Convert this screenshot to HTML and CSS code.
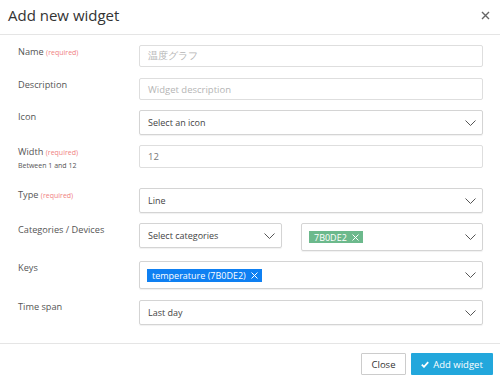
FILE: index.html
```html
<!DOCTYPE html>
<html>
<head>
  <title>Add new widget</title>
  <link rel="stylesheet" href="styles.css">
</head>
<body>
  <div class="modal">
    <div class="modal-header">
      <div class="modal-title">Add new widget</div>
      <div class="modal-close">
        <svg width="9" height="9" viewBox="0 0 9 9"><path d="M1 1L8 8M8 1L1 8" stroke="#666" stroke-width="1.4"/></svg>
      </div>
    </div>

    <div class="modal-body">
      <div class="form-row gap-11">
        <div class="form-label">Name <span class="required">(required)</span></div>
        <div class="form-field">
          <div class="text-input placeholder">温度グラフ</div>
        </div>
      </div>

      <div class="form-row">
        <div class="form-label">Description</div>
        <div class="form-field">
          <div class="text-input placeholder">Widget description</div>
        </div>
      </div>

      <div class="form-row">
        <div class="form-label">Icon</div>
        <div class="form-field">
          <div class="select-box">
            <span class="select-value">Select an icon</span>
            <svg class="chevron" width="11" height="6" viewBox="0 0 11 6"><path d="M0.5 0.5L5.5 5.5L10.5 0.5" fill="none" stroke="#555" stroke-width="1"/></svg>
          </div>
        </div>
      </div>

      <div class="form-row form-row-help">
        <div class="form-label">Width <span class="required">(required)</span>
          <div class="help">Between 1 and 12</div>
        </div>
        <div class="form-field">
          <div class="text-input number">12</div>
        </div>
      </div>

      <div class="form-row">
        <div class="form-label">Type <span class="required">(required)</span></div>
        <div class="form-field">
          <div class="select-box">
            <span class="select-value">Line</span>
            <svg class="chevron" width="11" height="6" viewBox="0 0 11 6"><path d="M0.5 0.5L5.5 5.5L10.5 0.5" fill="none" stroke="#555" stroke-width="1"/></svg>
          </div>
        </div>
      </div>

      <div class="form-row">
        <div class="form-label">Categories / Devices</div>
        <div class="form-field split">
          <div class="select-box categories">
            <span class="select-value">Select categories</span>
            <svg class="chevron" width="11" height="6" viewBox="0 0 11 6"><path d="M0.5 0.5L5.5 5.5L10.5 0.5" fill="none" stroke="#555" stroke-width="1"/></svg>
          </div>
          <div class="select-box multi devices">
            <span class="tag tag-green">7B0DE2
              <svg width="7" height="7" viewBox="0 0 7 7"><path d="M0.5 0.5L6.5 6.5M6.5 0.5L0.5 6.5" stroke="#fff" stroke-width="1"/></svg>
            </span>
            <svg class="chevron" width="11" height="6" viewBox="0 0 11 6"><path d="M0.5 0.5L5.5 5.5L10.5 0.5" fill="none" stroke="#555" stroke-width="1"/></svg>
          </div>
        </div>
      </div>

      <div class="form-row gap-11">
        <div class="form-label">Keys</div>
        <div class="form-field">
          <div class="select-box multi">
            <span class="tag tag-blue">temperature (7B0DE2)
              <svg width="7" height="7" viewBox="0 0 7 7"><path d="M0.5 0.5L6.5 6.5M6.5 0.5L0.5 6.5" stroke="#fff" stroke-width="1"/></svg>
            </span>
            <svg class="chevron" width="11" height="6" viewBox="0 0 11 6"><path d="M0.5 0.5L5.5 5.5L10.5 0.5" fill="none" stroke="#555" stroke-width="1"/></svg>
          </div>
        </div>
      </div>

      <div class="form-row">
        <div class="form-label">Time span</div>
        <div class="form-field">
          <div class="select-box">
            <span class="select-value">Last day</span>
            <svg class="chevron" width="11" height="6" viewBox="0 0 11 6"><path d="M0.5 0.5L5.5 5.5L10.5 0.5" fill="none" stroke="#555" stroke-width="1"/></svg>
          </div>
        </div>
      </div>
    </div>

    <div class="modal-footer">
      <div class="btn btn-default">Close</div>
      <div class="btn btn-primary">
        <svg width="8" height="7" viewBox="0 0 8 7"><path d="M0.8 3.6L3 5.8L7.2 1.2" fill="none" stroke="#fff" stroke-width="1.8"/></svg>
        Add widget
      </div>
    </div>
  </div>
</body>
</html>
```

FILE: styles.css
```css
body {
  margin: 0;
  background: #fff;
  font-family: "Open Sans", sans-serif;
  color: #555;
}

.modal {
  width: 500px;
  height: 379px;
  background: #fff;
}

.modal-header {
  display: flex;
  justify-content: space-between;
  align-items: flex-start;
  height: 35px;
  padding: 0 10px 0 8px;
  border-bottom: 1px solid #e5e5e5;
  box-sizing: border-box;
}

.modal-title {
  font-size: 15px;
  line-height: 20px;
  padding-top: 5px;
  color: #333;
}

.modal-close {
  padding-top: 11px;
  line-height: 0;
}

.modal-body {
  padding: 10px 17px 0 18px;
  height: 308px;
  box-sizing: border-box;
}

.form-row {
  display: flex;
  margin-bottom: 10px;
}

.form-row.gap-11 {
  margin-bottom: 11px;
}

.form-row-help {
  margin-bottom: 17px;
}

.form-label {
  width: 121px;
  flex-shrink: 0;
  font-size: 9.2px;
  line-height: 12px;
  padding-top: 1px;
  color: #555;
}

.required {
  font-size: 7px;
  color: #f07f7f;
}

.help {
  font-size: 7px;
  line-height: 10px;
  padding-top: 2px;
  color: #555;
}

.form-field {
  flex: 1;
}

.split {
  display: flex;
  align-items: flex-start;
  gap: 19px;
}

.text-input {
  height: 22px;
  border: 1px solid #dedede;
  border-radius: 2px;
  padding: 0 8px;
  display: flex;
  align-items: center;
  font-size: 9.5px;
  box-sizing: border-box;
}

.number {
  height: 23px;
  color: #777;
}

.placeholder {
  color: #b5b5b5;
}

.select-box {
  height: 25px;
  border: 1px solid #d4d4d4;
  border-radius: 2px;
  box-shadow: 0 1px 1px rgba(0, 0, 0, 0.06);
  padding: 0 6px 0 8px;
  display: flex;
  align-items: center;
  justify-content: space-between;
  font-size: 9px;
  color: #444;
  box-sizing: border-box;
}

.select-box.multi {
  height: 28px;
  padding-left: 7px;
}

.categories {
  width: 143px;
  flex-shrink: 0;
}

.devices {
  flex: 1;
}

.chevron {
  display: block;
}

.tag {
  display: inline-flex;
  align-items: center;
  gap: 5px;
  height: 13px;
  padding: 0 4px 0 5px;
  font-size: 9px;
  color: #fff;
}

.tag-green {
  background: #6cb98c;
  height: 12px;
}

.tag-blue {
  background: #0f80f2;
}

.modal-footer {
  display: flex;
  justify-content: flex-end;
  gap: 5px;
  border-top: 1px solid #e5e5e5;
  padding: 9px 7px 0 0;
}

.btn {
  display: flex;
  align-items: center;
  justify-content: center;
  gap: 4px;
  height: 22px;
  font-size: 9.5px;
  box-sizing: border-box;
  border-radius: 1px;
}

.btn-default {
  width: 45px;
  border: 1px solid #ccc;
  color: #333;
  background: #fff;
}

.btn-primary {
  width: 82px;
  background: #22a7dc;
  color: #fff;
}
```
